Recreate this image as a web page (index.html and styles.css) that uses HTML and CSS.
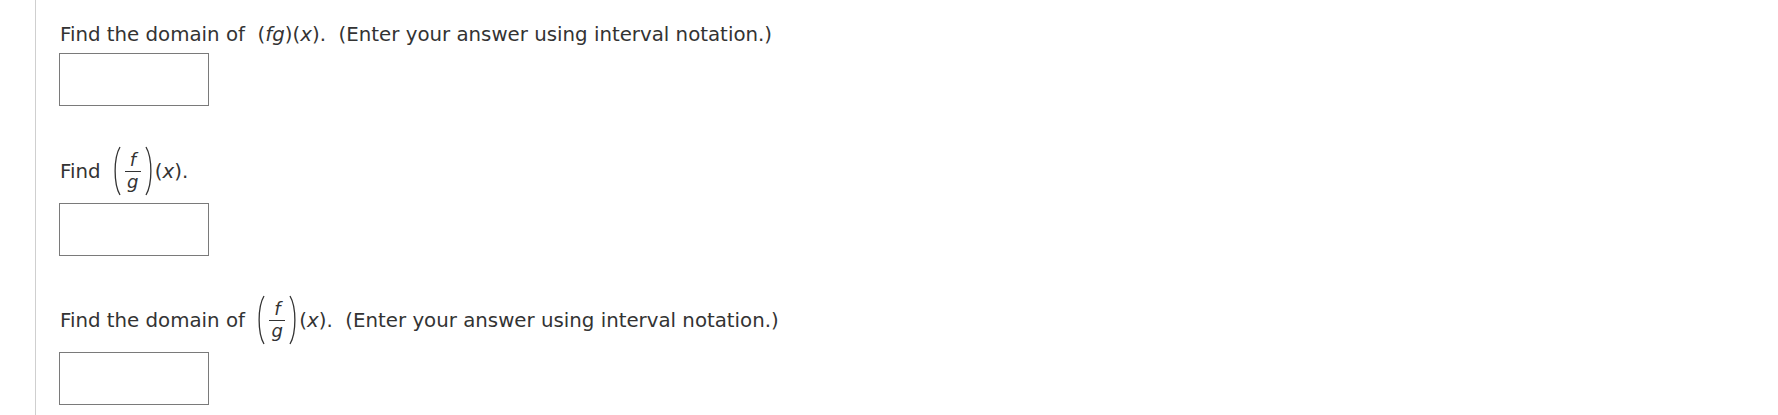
FILE: index.html
```html
<!DOCTYPE html>
<html>
<head>
<meta charset="utf-8">
<link rel="stylesheet" href="styles.css">
</head>
<body>
<div class="page">
  <div class="q q1">
    <div class="line"><span>Find the domain of&nbsp; (<i>fg</i>)(<i>x</i>).&nbsp; (Enter your answer using interval notation.)</span></div>
    <div class="ans"></div>
  </div>
  <div class="q q2">
    <div class="line tall">
      <span>Find&nbsp;</span>
      <span class="fx">
        <svg class="paren" width="9" height="50" viewBox="0 0 9 50"><path d="M8 1 C1.5 12 1.5 38 8 49" fill="none" stroke="#333" stroke-width="1.3"/></svg>
        <span class="frac"><i class="num">f</i><span class="bar"></span><i class="den">g</i></span>
        <svg class="paren" width="9" height="50" viewBox="0 0 9 50"><path d="M1 1 C7.5 12 7.5 38 1 49" fill="none" stroke="#333" stroke-width="1.3"/></svg>
      </span>
      <span>(<i>x</i>).</span>
    </div>
    <div class="ans"></div>
  </div>
  <div class="q q3">
    <div class="line tall">
      <span>Find the domain of&nbsp;</span>
      <span class="fx">
        <svg class="paren" width="9" height="50" viewBox="0 0 9 50"><path d="M8 1 C1.5 12 1.5 38 8 49" fill="none" stroke="#333" stroke-width="1.3"/></svg>
        <span class="frac"><i class="num">f</i><span class="bar"></span><i class="den">g</i></span>
        <svg class="paren" width="9" height="50" viewBox="0 0 9 50"><path d="M1 1 C7.5 12 7.5 38 1 49" fill="none" stroke="#333" stroke-width="1.3"/></svg>
      </span>
      <span>(<i>x</i>).&nbsp; (Enter your answer using interval notation.)</span>
    </div>
    <div class="ans"></div>
  </div>
</div>
</body>
</html>
```

FILE: styles.css
```css
html, body {
  margin: 0;
  padding: 0;
  background: #ffffff;
}

body {
  font-family: "DejaVu Sans", Verdana, sans-serif;
  font-size: 19.8px;
  color: #333333;
}

.page {
  margin-left: 35px;
  border-left: 1px solid #cfcfcf;
  min-height: 415px;
  padding-left: 23px;
  padding-top: 22px;
  box-sizing: border-box;
}

.q {
  display: flex;
  flex-direction: column;
  align-items: flex-start;
}

.q2 {
  margin-top: 39px;
}

.q3 {
  margin-top: 38px;
}

.line {
  display: flex;
  align-items: center;
  height: 24px;
  white-space: pre;
  padding-left: 1px;
}

.line.tall {
  height: 52px;
}

.line i {
  font-style: italic;
}

.ans {
  width: 148px;
  height: 51px;
  border: 1px solid #7a7a7a;
  background: #fff;
  margin-top: 7px;
}

.tall + .ans {
  margin-top: 6px;
}

.fx {
  display: inline-flex;
  align-items: center;
  margin-left: 5px;
  margin-right: 1px;
}

.paren {
  display: block;
}

.frac {
  display: inline-flex;
  flex-direction: column;
  align-items: center;
  padding: 0 4px;
  font-size: 18px;
}

.num, .den {
  line-height: 20px;
  display: block;
}

.num {
  margin-bottom: 1px;
}

.bar {
  display: block;
  width: 16px;
  height: 0;
  border-top: 1px solid #333;
}

.den {
  margin-top: 0;
}
```
